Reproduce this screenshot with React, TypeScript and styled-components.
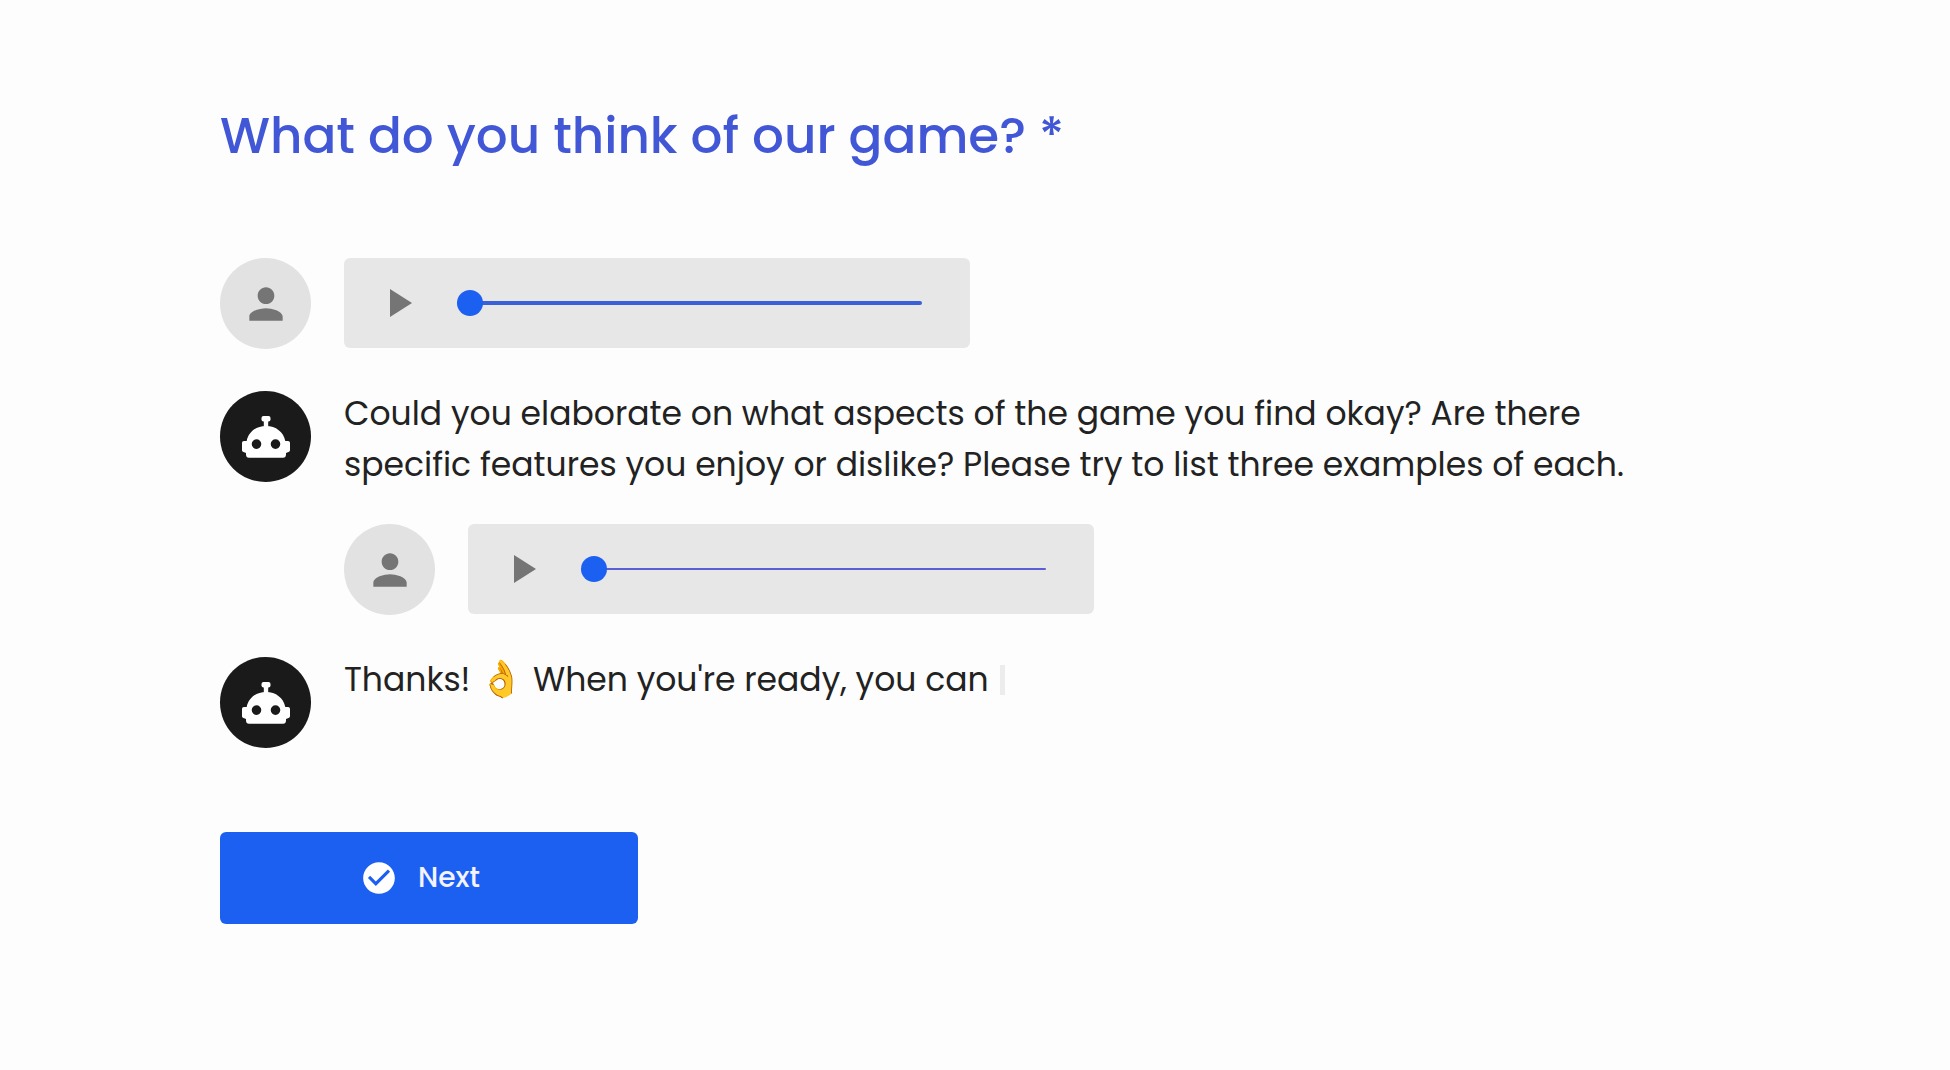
import React from 'react';
import styled, { createGlobalStyle } from 'styled-components';
import { MdCheckCircle, MdPerson, MdPlayArrow } from 'react-icons/md';

const GlobalStyle = createGlobalStyle`
  *, *::before, *::after { box-sizing: border-box; }
  body {
    margin: 0;
    background: #fdfdfd;
    color: #222;
    font-family: Poppins, Inter, 'Noto Color Emoji', sans-serif;
  }
`;

const Page = styled.main`
  max-width: 1730px;
  margin-left: 220px;
  padding: 100px 100px 64px 0;
`;

const Title = styled.h1`
  margin: 0 0 86px;
  color: #4257d6;
  font-size: 50px;
  font-weight: 500;
  line-height: 72px;
`;

const Thread = styled.div`
  display: flex;
  flex-direction: column;
  gap: 32px;
`;

const Row = styled.div<{ $nested?: boolean }>`
  display: flex;
  align-items: flex-start;
  gap: 33px;
  min-height: 101px;
  margin-left: ${(p) => (p.$nested ? '124px' : '0')};
`;

const Avatar = styled.div<{ $bot?: boolean }>`
  display: grid;
  place-items: center;
  flex: none;
  width: 91px;
  height: 91px;
  border-radius: 50%;
  background: ${(p) => (p.$bot ? '#1a1a1a' : '#e2e2e2')};
  color: ${(p) => (p.$bot ? '#fff' : '#757575')};
`;

const Message = styled.p`
  max-width: 1320px;
  margin: -3px 0 0;
  font-size: 33px;
  line-height: 51px;
`;

const Emoji = styled.span`
  font-size: 36px;
  line-height: 1;
`;

const Caret = styled.span`
  display: inline-block;
  width: 5px;
  height: 30px;
  margin-left: 2px;
  background: #ececec;
  vertical-align: -4px;
`;

const Player = styled.div`
  display: flex;
  align-items: center;
  gap: 35px;
  width: 626px;
  height: 90px;
  padding: 0 48px 0 30px;
  border-radius: 6px;
  background: #e7e7e7;
`;

const PlayButton = styled.button`
  display: flex;
  flex: none;
  padding: 0;
  border: 0;
  background: none;
  color: #757575;
  cursor: pointer;
`;

const Seek = styled.input<{ $track: number }>`
  appearance: none;
  flex: 1;
  min-width: 0;
  height: 26px;
  margin: 0;
  background: none;
  cursor: pointer;

  &::-webkit-slider-runnable-track {
    height: ${(p) => p.$track}px;
    border-radius: 2px;
    background: ${(p) => (p.$track > 3 ? '#3a60d8' : '#5b5fd6')};
  }

  &::-webkit-slider-thumb {
    appearance: none;
    width: 26px;
    height: 26px;
    margin-top: ${(p) => (p.$track - 26) / 2}px;
    border: 0;
    border-radius: 50%;
    background: #1c60f2;
  }
`;

const NextButton = styled.button`
  display: flex;
  align-items: center;
  justify-content: center;
  gap: 20px;
  width: 418px;
  height: 92px;
  margin-top: 74px;
  padding: 0 18px 0 0;
  border: 0;
  border-radius: 6px;
  background: #1c60f2;
  color: #f4f3ff;
  font: inherit;
  font-size: 28px;
  font-weight: 500;
  cursor: pointer;
`;

const BotIcon = () => (
  <svg width="48" height="42" viewBox="0 0 48 42" fill="currentColor" aria-hidden="true">
    <rect x="19.500" width="9" height="5.500" rx="2" />
    <path d="M21.800 4h4.400v8h-4.400z" />
    <path
      fillRule="evenodd"
      d="M24 10C34 10 41.500 16 43.300 25H46c1.200 0 2 .8 2 2v7c0 1-.6 1.700-1.500 2L44 37v1.500c0 2-1 3.300-3 3.300H7c-2 0-3-1.300-3-3.300V37l-2.500-1C.6 35.700 0 35 0 34v-7c0-1.200.8-2 2-2h2.700C6.500 16 14 10 24 10zM14.500 23.300a4.800 4.800 0 1 0 0 9.600 4.800 4.800 0 0 0 0-9.600zm19 0a4.800 4.800 0 1 0 0 9.600 4.800 4.800 0 0 0 0-9.600z"
    />
  </svg>
);

const VoiceReply = ({ label, track, nested }: { label: string; track: number; nested?: boolean }) => (
  <Row $nested={nested}>
    <Avatar>
      <MdPerson size={50} />
    </Avatar>
    <Player>
      <PlayButton type="button" aria-label={`Play ${label}`}>
        <MdPlayArrow size={48} />
      </PlayButton>
      <Seek type="range" min={0} max={100} defaultValue={0} $track={track} aria-label={`Position in ${label}`} />
    </Player>
  </Row>
);

const BotMessage = ({ children }: { children: React.ReactNode }) => (
  <Row>
    <Avatar $bot>
      <BotIcon />
    </Avatar>
    <Message>{children}</Message>
  </Row>
);

export default function App() {
  return (
    <>
      <GlobalStyle />
      <Page>
        <Title>What do you think of our game? *</Title>
        <Thread>
          <VoiceReply label="first reply" track={4} />
          <BotMessage>
            Could you elaborate on what aspects of the game you find okay? Are there
            <br />
            specific features you enjoy or dislike? Please try to list three examples of each.
          </BotMessage>
          <VoiceReply label="second reply" track={2} nested />
          <BotMessage>
            Thanks! <Emoji>👌</Emoji> When you're ready, you can <Caret />
          </BotMessage>
        </Thread>
        <NextButton type="button">
          <MdCheckCircle size={38} color="#fff" />
          Next
        </NextButton>
      </Page>
    </>
  );
}
